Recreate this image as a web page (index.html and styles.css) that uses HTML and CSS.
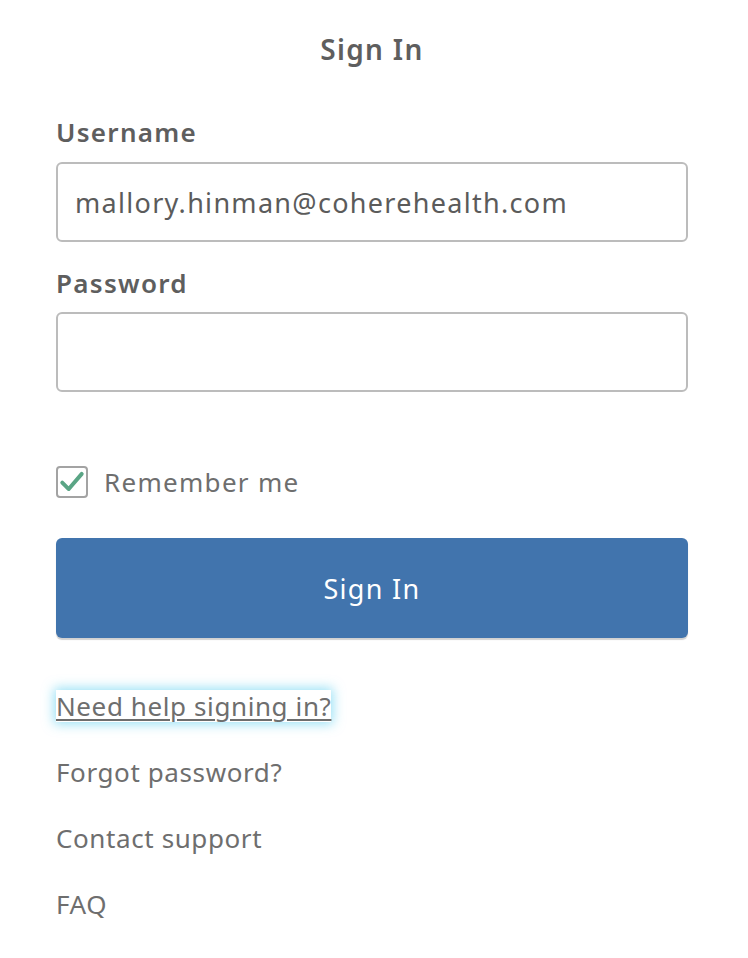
FILE: index.html
```html
<!DOCTYPE html>
<html lang="en">
  <head>
    <meta charset="UTF-8" />
    <meta name="viewport" content="width=device-width, initial-scale=1.0" />
    <title>Sign In</title>
    <link rel="stylesheet" href="styles.css">
  </head>
  <body>
    <div class="signin">
      <form class="signin-form" action="#" method="POST">
        <h2 class="signin__title">Sign In</h2>

        <label for="signin-username" class="signin__label">Username</label>
        <input id="signin-username" class="signin__input" type="text" value="mallory.hinman@coherehealth.com" />

        <label for="signin-password" class="signin__label signin__label--second">Password</label>
        <input id="signin-password" class="signin__input" type="password" />

        <label for="signin-remember" class="signin__remember">
          <span class="signin__checkbox">
            <svg viewBox="0 0 24 24" width="26" height="26">
              <path d="M3 12.5 L9 18.5 L21 4.5" fill="none" stroke="#5aa585" stroke-width="3.6" stroke-linecap="round" stroke-linejoin="round" />
            </svg>
          </span>
          Remember me
        </label>

        <button class="signin__submit" type="submit">Sign In</button>
      </form>

      <!-- 도움말 링크 -->
      <ul class="signin-help">
        <li class="signin-help__item"><a href="#" class="signin-help__link signin-help__link--focus">Need help signing in?</a></li>
        <li class="signin-help__item"><a href="#" class="signin-help__link">Forgot password?</a></li>
        <li class="signin-help__item"><a href="#" class="signin-help__link">Contact support</a></li>
        <li class="signin-help__item"><a href="#" class="signin-help__link">FAQ</a></li>
      </ul>
    </div>
  </body>
</html>
```
FILE: styles.css
```css
body {
  margin: 0;
  background-color: #ffffff;
  font-family: "Noto Sans", "Open Sans", sans-serif;
  letter-spacing: 1.3px;
}

* {
  box-sizing: border-box;
}

.signin {
  padding: 0 60px 0 56px;
}

.signin-form {
  display: flex;
  flex-direction: column;
}

.signin__title {
  margin: 29px 0 0;
  color: #5e5e5e;
  font-size: 28px;
  font-weight: 600;
  line-height: 40px;
  text-align: center;
}

.signin__label {
  display: block;
  margin-top: 47px;
  margin-bottom: 14px;
  color: #5e5e5e;
  font-size: 26px;
  font-weight: 600;
  line-height: 32px;
}

.signin__label--second {
  margin-top: 25px;
  margin-bottom: 13px;
}

.signin__input {
  width: 100%;
  height: 80px;
  margin: 0;
  padding: 0 17px;
  border: 2px solid #bcbcbc;
  border-radius: 6px;
  outline: none;
  color: #5b5b5b;
  font-family: inherit;
  font-size: 27px;
  letter-spacing: 1.3px;
}

.signin__remember {
  display: flex;
  align-items: center;
  margin-top: 74px;
  color: #6e6e6e;
  font-size: 26px;
  line-height: 32px;
}

.signin__checkbox {
  display: flex;
  align-items: center;
  justify-content: center;
  width: 32px;
  height: 32px;
  margin-right: 16px;
  border: 2px solid #a3a3a3;
  border-radius: 4px;
}

.signin__submit {
  display: block;
  width: 100%;
  height: 100px;
  margin-top: 40px;
  border: none;
  border-radius: 6px;
  background-color: #4174ad;
  box-shadow: 0 2px 1px rgba(0, 0, 0, 0.18);
  color: #ffffff;
  font-family: inherit;
  font-size: 27px;
  letter-spacing: 1.3px;
  cursor: pointer;
}

.signin-help {
  margin: 52px 0 0;
  padding: 0;
  list-style: none;
}

.signin-help__item + .signin-help__item {
  margin-top: 34px;
}

.signin-help__link {
  display: inline-block;
  color: #6e6e6e;
  font-size: 26px;
  line-height: 32px;
  letter-spacing: 0.6px;
  text-decoration: none;
}

.signin-help__link--focus {
  text-decoration: underline;
  text-decoration-thickness: 2px;
  text-underline-offset: 3px;
  background-color: #ffffff;
  box-shadow: 0 0 12px 2px rgba(81, 203, 238, 0.6);
}
```
